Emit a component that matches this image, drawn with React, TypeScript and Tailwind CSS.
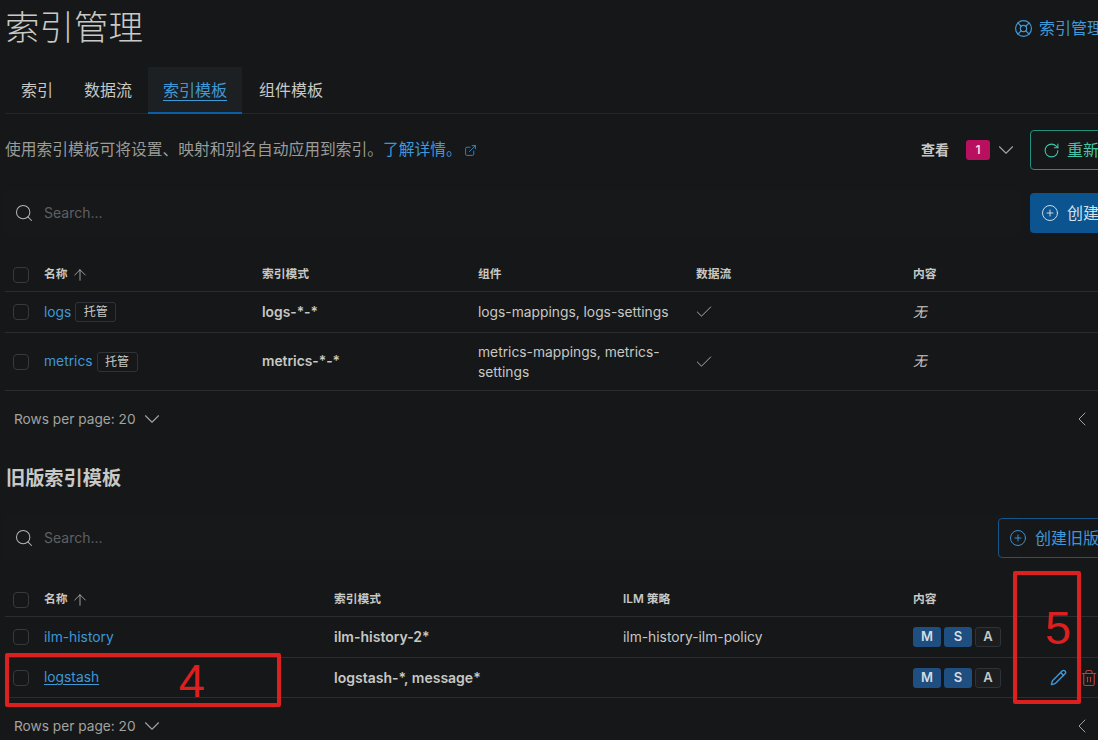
import { ArrowUp, Check, ChevronDown, ChevronLeft, CirclePlus, ExternalLink, LifeBuoy, Pencil, RotateCw, Search, Trash2 } from 'lucide-react'

const rowLine = 'border-b border-[#2a2d31]'

function Box() {
  return <span className="block size-4 rounded-[4px] border border-[#36393d]" />
}

function Chevron({ className = '' }: { className?: string }) {
  return <ChevronDown size={26} strokeWidth={1} className={className} />
}

function SearchRow({ button }: { button: React.ReactNode }) {
  return (
    <div className="flex items-center">
      <div className="flex h-[45px] w-[1015px] shrink-0 items-center bg-[#16181a] pl-[9px]">
        <Search size={20} strokeWidth={1.25} className="text-[#b5b5b1]" />
        <input
          placeholder="Search..."
          className="ml-[10px] w-60 bg-transparent text-sm outline-none placeholder:text-[#5e6062]"
        />
      </div>
      {button}
    </div>
  )
}

function Pager() {
  return (
    <div className="flex h-full items-center justify-between pl-[9px] text-[13.7px] text-[#a3a39f]">
      <span className="flex items-center gap-[3px]">
        Rows per page: 20 <Chevron />
      </span>
      <ChevronLeft size={24} strokeWidth={1} className="mr-[116px] text-[#a3a39f]" />
    </div>
  )
}

function Managed() {
  return (
    <span className="ml-1 inline-flex h-5 w-[41px] items-center justify-center rounded-[3px] border border-[#2f3236] text-xs text-[#c8c8c4]">
      托管
    </span>
  )
}

function Flag({ label, on }: { label: string; on?: boolean }) {
  return (
    <span
      className={
        on
          ? 'flex h-5 w-[28px] items-center justify-center rounded-[3px] bg-[#1f4e80] text-[13px] font-semibold text-[#d8dde2]'
          : 'flex h-5 w-[26px] items-center justify-center rounded-[3px] border border-[#2f3236] bg-[#1c1d1f] text-[13px] font-semibold text-[#c8c8c4]'
      }
    >
      {label}
    </span>
  )
}

function Flags() {
  return (
    <div className="flex gap-[3px]">
      <Flag label="M" on />
      <Flag label="S" on />
      <Flag label="A" />
    </div>
  )
}

function Tick() {
  return <Check size={20} strokeWidth={1} className="-ml-[2px]" />
}

const grid1 = 'grid grid-cols-[31px_218px_216px_218px_217px_1fr] items-center pl-2'
const grid2 = 'grid grid-cols-[31px_290px_289px_290px_132px_1fr] items-center pl-2'

function NameHead() {
  return (
    <span className="flex items-center gap-[3px]">
      名称 <ArrowUp size={18} strokeWidth={1} />
    </span>
  )
}

export default function App() {
  return (
    <div className="relative h-[740px] w-[1098px] overflow-hidden bg-[#151719] font-['Inter','Noto_Sans_CJK_SC',sans-serif] text-[#c8c8c4]">
      <div className="w-[1210px] pl-[5px]">
        <div className="flex h-[56px] items-center justify-between">
          <h1 className="text-[34.5px] font-light leading-none text-[#c9c9c5]">索引管理</h1>
          <a className="flex w-[196px] items-center gap-[6px] text-base text-[#3f98d8]">
            <LifeBuoy size={19} strokeWidth={1.5} />
            索引管理
          </a>
        </div>

        <nav className="mt-[11px] flex h-[47px] items-stretch border-b border-[#24272a] text-base">
          <span className="flex items-center pl-4 pr-[15px]">索引</span>
          <span className="flex items-center px-4">数据流</span>
          <span className="-mb-px flex items-center border-b-2 border-[#0b5ea5] bg-[#1c2023] px-[15px] text-[#3f98d8] underline underline-offset-4">
            索引模板
          </span>
          <span className="flex items-center pl-[17px] pr-4">组件模板</span>
        </nav>

        <div className="mt-4 flex h-10 items-center justify-between">
          <p className="flex items-center text-[15.75px] text-[#9b9b97]">
            使用索引模板可将设置、映射和别名自动应用到索引。
            <a className="flex items-center text-[#3f98d8]">
              了解详情。
              <ExternalLink size={13} strokeWidth={1.5} className="ml-[2px]" />
            </a>
          </p>
          <div className="flex items-center">
            <span className="text-sm font-semibold">查看</span>
            <span className="ml-[17px] flex h-5 w-6 items-center justify-center rounded-[3px] bg-[#b80f5f] text-xs font-semibold text-[#f3d9e5]">
              1
            </span>
            <Chevron className="ml-[3px] text-[#a3a39f]" />
            <button className="ml-[11px] flex h-10 w-[180px] items-center gap-[7px] rounded-[4px] border border-[#23917f] pl-3 text-base text-[#46c4a8]">
              <RotateCw size={17} strokeWidth={1.5} />
              重新
            </button>
          </div>
        </div>

        <div className="mt-5">
          <SearchRow
            button={
              <button className="ml-[10px] flex h-10 w-[150px] items-center gap-2 rounded-[4px] bg-[#0b5490] pl-[11px] text-base text-[#d6e2ec]">
                <CirclePlus size={18} strokeWidth={1.25} />
                创建
              </button>
            }
          />
        </div>

        <div className={`${grid1} ${rowLine} mt-[22px] h-[35px] pt-[2px] text-[11.75px] font-semibold`}>
          <Box />
          <NameHead />
          <span>索引模式</span>
          <span>组件</span>
          <span>数据流</span>
          <span>内容</span>
        </div>
        <div className={`${grid1} ${rowLine} h-[41px] text-[13.8px]`}>
          <Box />
          <span className="flex items-center text-[#3f98d8]">
            logs
            <Managed />
          </span>
          <span className="font-semibold">logs-*-*</span>
          <span>logs-mappings, logs-settings</span>
          <Tick />
          <span className="italic">无</span>
        </div>
        <div className={`${grid1} ${rowLine} h-[58px] text-[13.8px]`}>
          <Box />
          <span className="flex items-center text-[#3f98d8]">
            metrics
            <Managed />
          </span>
          <span className="font-semibold">metrics-*-*</span>
          <span className="w-[200px] leading-5">metrics-mappings, metrics-settings</span>
          <Tick />
          <span className="italic">无</span>
        </div>
        <div className="h-[56px]">
          <Pager />
        </div>

        <h2 className="ml-px mt-[17px] text-[19.2px] font-semibold leading-7">旧版索引模板</h2>

        <div className="mt-[23px]">
          <SearchRow
            button={
              <button className="-ml-[22px] flex h-10 w-[182px] items-center gap-2 rounded-[4px] border border-[#17568a] pl-[10px] text-base text-[#3f98d8]">
                <CirclePlus size={18} strokeWidth={1.25} />
                创建旧版
              </button>
            }
          />
        </div>

        <div className={`${grid2} ${rowLine} mt-[21px] h-[36px] pt-[2px] text-[11.75px] font-semibold`}>
          <Box />
          <NameHead />
          <span>索引模式</span>
          <span>ILM 策略</span>
          <span>内容</span>
          <span />
        </div>
        <div className={`${grid2} ${rowLine} h-[41px] text-[13.8px]`}>
          <Box />
          <span className="text-[#3f98d8]">ilm-history</span>
          <span className="text-sm font-semibold">ilm-history-2*</span>
          <span>ilm-history-ilm-policy</span>
          <Flags />
          <span />
        </div>
        <div className={`${grid2} ${rowLine} h-[40px] text-[13.8px]`}>
          <Box />
          <span className="text-[#3f98d8] underline underline-offset-2">logstash</span>
          <span className="text-sm font-semibold">logstash-*, message*</span>
          <span />
          <Flags />
          <span className="flex items-center gap-[13px] pl-[5px]">
            <Pencil size={17} strokeWidth={2} className="text-[#3f98d8]" />
            <Trash2 size={18} strokeWidth={1.5} className="text-[#b8403c]" />
          </span>
        </div>
        <div className="h-[56px]">
          <Pager />
        </div>
      </div>

      {/* red annotations drawn over the screenshot */}
      <div className="absolute left-[5px] top-[653px] flex h-[54px] w-[276px] items-center justify-end rounded-[2px] border-4 border-[#dc1f1f] pr-[72px] font-['Liberation_Sans',sans-serif] text-[47px] leading-none text-[#dc1f1f]">
        4
      </div>
      <div className="absolute left-[1013px] top-[571px] h-[133px] w-[68px] rounded-[2px] border-4 border-[#dc1f1f] pl-[28px] pt-[29px] font-['Liberation_Sans',sans-serif] text-[47px] leading-none text-[#dc1f1f]">
        5
      </div>
    </div>
  )
}
